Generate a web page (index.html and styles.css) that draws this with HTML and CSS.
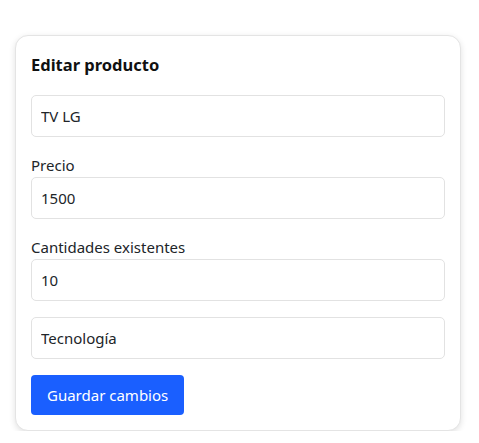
FILE: index.html
```html
<!DOCTYPE html>
<html lang="es">
<head>
<meta charset="utf-8">
<title>Editar producto</title>
<link rel="stylesheet" href="styles.css">
</head>
<body>
<div class="page">
  <form class="card">
    <h2 class="title">Editar producto</h2>
    <input class="field" type="text" value="TV LG">
    <div class="group">
      <label class="label">Precio</label>
      <input class="field" type="text" value="1500">
    </div>
    <div class="group">
      <label class="label">Cantidades existentes</label>
      <input class="field" type="text" value="10">
    </div>
    <input class="field" type="text" value="Tecnología">
    <button class="btn" type="button">Guardar cambios</button>
  </form>
</div>
</body>
</html>
```

FILE: styles.css
```css
html, body {
  margin: 0;
  padding: 0;
  background: #ffffff;
}
body {
  font-family: "Noto Sans", "Open Sans", sans-serif;
  color: #212529;
}
.page {
  padding: 35px 18px 0 15px;
}
.card {
  width: 446px;
  box-sizing: border-box;
  padding: 15px;
  border: 1px solid #e4e4e4;
  border-radius: 13px;
  box-shadow: 0 2px 6px rgba(0, 0, 0, 0.12);
  display: flex;
  flex-direction: column;
  gap: 16px;
  background: #fff;
}
.title {
  margin: 0;
  font-size: 16.5px;
  line-height: 28px;
  font-weight: 700;
  color: #111;
}
.group {
  display: flex;
  flex-direction: column;
}
.label {
  font-size: 15px;
  line-height: 24px;
}
.field {
  box-sizing: border-box;
  width: 100%;
  height: 42px;
  padding: 0 9px;
  border: 1px solid #e2e2e2;
  border-radius: 5px;
  font-family: inherit;
  font-size: 15px;
  color: #212529;
  background: #fff;
  outline: none;
}
.btn {
  align-self: flex-start;
  height: 40px;
  padding: 0 16px;
  border: none;
  border-radius: 4px;
  background: #1a5fff;
  color: #fff;
  font-family: inherit;
  font-size: 15px;
  cursor: pointer;
}
```
